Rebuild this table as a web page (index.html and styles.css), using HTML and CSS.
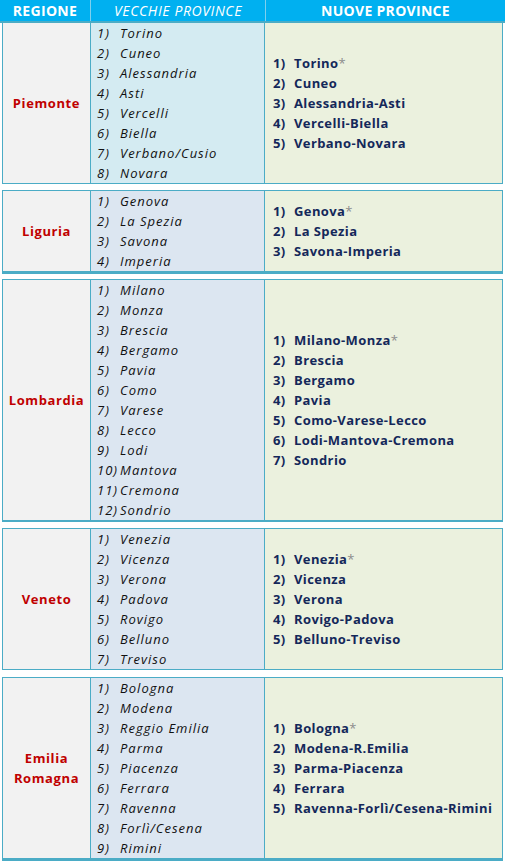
FILE: index.html
```html
<!DOCTYPE html>
<html lang="it">
<head>
<meta charset="utf-8">
<title>Province</title>
<link rel="stylesheet" href="styles.css">
</head>
<body>
<div class="table">
  <div class="header">
    <div class="hcell hbold">REGIONE</div>
    <div class="hcell hitalic">VECCHIE PROVINCE</div>
    <div class="hcell hbold last">NUOVE PROVINCE</div>
  </div>

  <div class="block first">
    <div class="region">Piemonte</div>
    <ol class="old cyan">
      <li><span class="n">1)</span>Torino</li>
      <li><span class="n">2)</span>Cuneo</li>
      <li><span class="n">3)</span>Alessandria</li>
      <li><span class="n">4)</span>Asti</li>
      <li><span class="n">5)</span>Vercelli</li>
      <li><span class="n">6)</span>Biella</li>
      <li><span class="n">7)</span>Verbano/Cusio</li>
      <li><span class="n">8)</span>Novara</li>
    </ol>
    <ol class="new">
      <li><span class="n">1)</span>Torino<span class="ast">*</span></li>
      <li><span class="n">2)</span>Cuneo</li>
      <li><span class="n">3)</span>Alessandria-Asti</li>
      <li><span class="n">4)</span>Vercelli-Biella</li>
      <li><span class="n">5)</span>Verbano-Novara</li>
    </ol>
  </div>

  <div class="block thick3">
    <div class="region">Liguria</div>
    <ol class="old">
      <li><span class="n">1)</span>Genova</li>
      <li><span class="n">2)</span>La Spezia</li>
      <li><span class="n">3)</span>Savona</li>
      <li><span class="n">4)</span>Imperia</li>
    </ol>
    <ol class="new">
      <li><span class="n">1)</span>Genova<span class="ast">*</span></li>
      <li><span class="n">2)</span>La Spezia</li>
      <li><span class="n">3)</span>Savona-Imperia</li>
    </ol>
  </div>

  <div class="block thick2 tight">
    <div class="region">Lombardia</div>
    <ol class="old">
      <li><span class="n">1)</span>Milano</li>
      <li><span class="n">2)</span>Monza</li>
      <li><span class="n">3)</span>Brescia</li>
      <li><span class="n">4)</span>Bergamo</li>
      <li><span class="n">5)</span>Pavia</li>
      <li><span class="n">6)</span>Como</li>
      <li><span class="n">7)</span>Varese</li>
      <li><span class="n">8)</span>Lecco</li>
      <li><span class="n">9)</span>Lodi</li>
      <li><span class="n">10)</span>Mantova</li>
      <li><span class="n">11)</span>Cremona</li>
      <li><span class="n">12)</span>Sondrio</li>
    </ol>
    <ol class="new">
      <li><span class="n">1)</span>Milano-Monza<span class="ast">*</span></li>
      <li><span class="n">2)</span>Brescia</li>
      <li><span class="n">3)</span>Bergamo</li>
      <li><span class="n">4)</span>Pavia</li>
      <li><span class="n">5)</span>Como-Varese-Lecco</li>
      <li><span class="n">6)</span>Lodi-Mantova-Cremona</li>
      <li><span class="n">7)</span>Sondrio</li>
    </ol>
  </div>

  <div class="block">
    <div class="region">Veneto</div>
    <ol class="old">
      <li><span class="n">1)</span>Venezia</li>
      <li><span class="n">2)</span>Vicenza</li>
      <li><span class="n">3)</span>Verona</li>
      <li><span class="n">4)</span>Padova</li>
      <li><span class="n">5)</span>Rovigo</li>
      <li><span class="n">6)</span>Belluno</li>
      <li><span class="n">7)</span>Treviso</li>
    </ol>
    <ol class="new">
      <li><span class="n">1)</span>Venezia<span class="ast">*</span></li>
      <li><span class="n">2)</span>Vicenza</li>
      <li><span class="n">3)</span>Verona</li>
      <li><span class="n">4)</span>Rovigo-Padova</li>
      <li><span class="n">5)</span>Belluno-Treviso</li>
    </ol>
  </div>

  <div class="block thick3 wide">
    <div class="region">Emilia<br>Romagna</div>
    <ol class="old">
      <li><span class="n">1)</span>Bologna</li>
      <li><span class="n">2)</span>Modena</li>
      <li><span class="n">3)</span>Reggio Emilia</li>
      <li><span class="n">4)</span>Parma</li>
      <li><span class="n">5)</span>Piacenza</li>
      <li><span class="n">6)</span>Ferrara</li>
      <li><span class="n">7)</span>Ravenna</li>
      <li><span class="n">8)</span>Forlì/Cesena</li>
      <li><span class="n">9)</span>Rimini</li>
    </ol>
    <ol class="new">
      <li><span class="n">1)</span>Bologna<span class="ast">*</span></li>
      <li><span class="n">2)</span>Modena-R.Emilia</li>
      <li><span class="n">3)</span>Parma-Piacenza</li>
      <li><span class="n">4)</span>Ferrara</li>
      <li><span class="n">5)</span>Ravenna-Forlì/Cesena-Rimini</li>
    </ol>
  </div>
</div>
</body>
</html>
```

FILE: styles.css
```css
html, body {
  margin: 0;
  padding: 0;
  background: #ffffff;
}

body {
  font-family: "Open Sans", "DejaVu Sans", sans-serif;
  font-size: 13px;
}

.table {
  width: 505px;
}

.header {
  display: grid;
  grid-template-columns: 91px 175px 1fr;
  height: 21px;
  background: #00b0f0;
  border-bottom: 2px solid #4bacc6;
  color: #ffffff;
}

.hcell {
  display: flex;
  align-items: center;
  justify-content: center;
  font-size: 14px;
  line-height: 21px;
  border-right: 1px solid #7fd0ee;
}

.hcell.last {
  border-right: none;
}

.hbold {
  font-weight: 700;
  letter-spacing: 0.3px;
}

.hitalic {
  font-style: italic;
  letter-spacing: 0.6px;
}

.block {
  display: grid;
  grid-template-columns: 88px 174px 1fr;
  width: 501px;
  margin-left: 2px;
  margin-top: 6px;
  box-sizing: border-box;
  border: 1px solid #4bacc6;
}

.block.first {
  margin-top: 0;
  border-top: none;
}

.block.thick3 {
  border-bottom-width: 3px;
}

.block.thick2 {
  border-bottom-width: 2px;
}

.block.tight {
  margin-top: 5px;
}

.block.wide {
  margin-top: 7px;
}

.region {
  display: flex;
  align-items: center;
  justify-content: center;
  text-align: center;
  background: #f2f2f2;
  border-right: 1px solid #4bacc6;
  color: #c00000;
  font-weight: 700;
  font-size: 13px;
  letter-spacing: 0.6px;
  line-height: 20px;
}

ol {
  list-style: none;
  margin: 0;
  padding: 0;
}

.old {
  background: #dce6f1;
  border-right: 1px solid #4bacc6;
  padding-left: 6px;
  font-style: italic;
  color: #111111;
  letter-spacing: 1px;
}

.old.cyan {
  background: #d4ebf2;
}

.old li {
  height: 20px;
  line-height: 20px;
  white-space: nowrap;
  display: flex;
}

.n {
  display: inline-block;
  flex: 0 0 auto;
  min-width: 23px;
}

.new {
  background: #ebf1de;
  padding-left: 8px;
  display: flex;
  flex-direction: column;
  justify-content: center;
  color: #14285a;
  font-weight: 700;
  letter-spacing: 0.4px;
}

.new li {
  height: 20px;
  line-height: 20px;
  white-space: nowrap;
  display: flex;
}

.new .n {
  min-width: 21px;
}

.ast {
  color: #8c8c8c;
  font-weight: 400;
}
```
